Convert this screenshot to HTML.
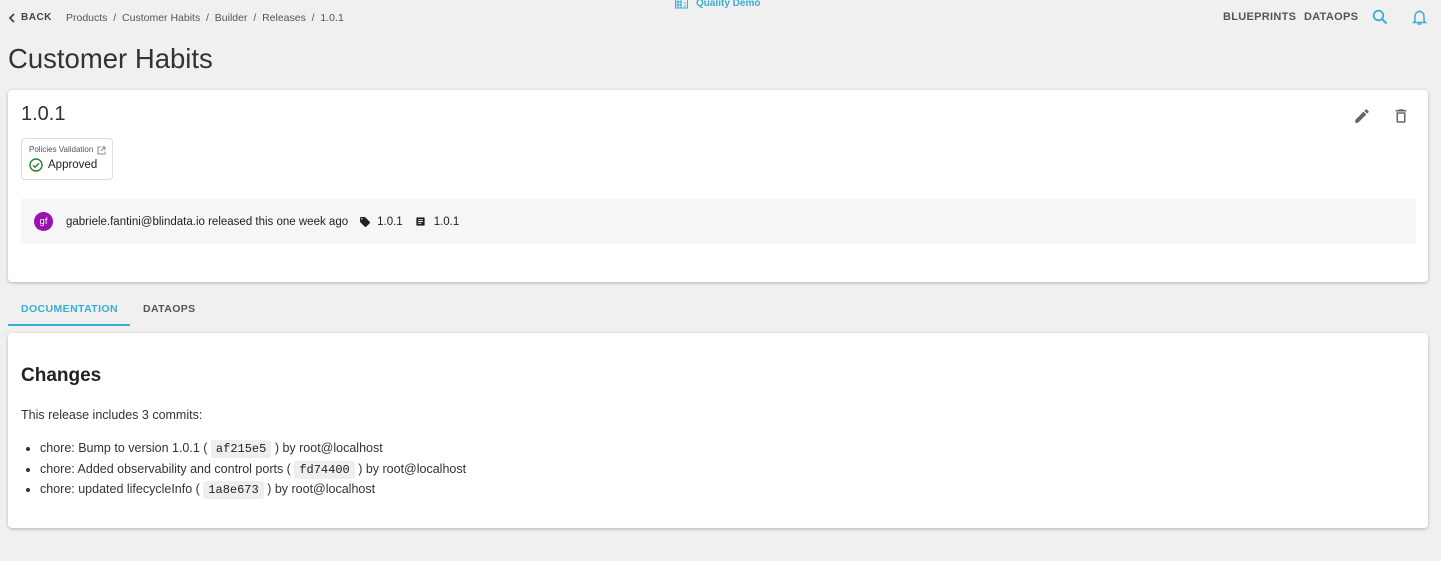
<!DOCTYPE html>
<html><head><meta charset="utf-8"><style>
*{box-sizing:border-box;margin:0;padding:0}
body{width:1441px;height:561px;background:#f0f0f0;font-family:"Liberation Sans",sans-serif;color:#333;position:relative;overflow:hidden}
.abs{position:absolute}
.card{position:absolute;left:8px;width:1420px;background:#fff;border-radius:4px;box-shadow:0 1px 3px rgba(0,0,0,.25)}
code{font-family:"Liberation Mono",monospace;font-size:12px;background:#eee;border-radius:3px;padding:2px 5px;color:#222}
</style></head><body>
<div class="abs" style="left:8px;top:12px;font-size:10px;font-weight:bold;letter-spacing:.5px;color:#444;display:flex;align-items:center">
<svg width="9" height="10" viewBox="0 0 9 10"><path d="M6 1L2 5l4 4" stroke="#444" stroke-width="1.8" fill="none"/></svg><span style="margin-left:4px">BACK</span></div>
<div class="abs" style="left:66px;top:12px;font-size:10.5px;color:#555">Products &nbsp;/ &nbsp;Customer Habits &nbsp;/ &nbsp;Builder &nbsp;/ &nbsp;Releases &nbsp;/ &nbsp;1.0.1</div>
<div class="abs" style="left:675px;top:-2px;font-size:10px;font-weight:bold;color:#3aaed3;display:flex;align-items:center">
<svg width="13" height="11" viewBox="0 0 13 11"><rect x="0.5" y="1" width="12" height="9" fill="none" stroke="#3aaed3"/><path d="M3 1v9M6 1v9M0 4h7M0 7h7M9 5h2M9 8h2" stroke="#3aaed3"/></svg><span style="margin-left:8px">Quality Demo</span></div>
<div class="abs" style="left:1223px;top:11px;font-size:11px;font-weight:bold;color:#555;letter-spacing:.3px">BLUEPRINTS</div>
<div class="abs" style="left:1304px;top:11px;font-size:11px;font-weight:bold;color:#555;letter-spacing:.3px">DATAOPS</div>
<svg class="abs" style="left:1372px;top:9px" width="16" height="16" viewBox="0 0 16 16"><circle cx="6.5" cy="6.5" r="4.8" stroke="#3aaed3" stroke-width="1.8" fill="none"/><path d="M10 10l4.5 4.5" stroke="#3aaed3" stroke-width="2"/></svg>
<svg class="abs" style="left:1412px;top:9px" width="15" height="17" viewBox="0 0 15 17"><path d="M3 12V7a4.5 4.5 0 019 0v5l1.5 1.5h-12z" stroke="#3aaed3" stroke-width="1.5" fill="none"/><path d="M5.5 15h4" stroke="#3aaed3" stroke-width="1.5"/><circle cx="7.5" cy="2" r="1" fill="#3aaed3"/></svg>
<div class="abs" style="left:8px;top:43px;font-size:27.5px;color:#333">Customer Habits</div>
<div class="card" style="top:90px;height:192px">
<div class="abs" style="left:13px;top:13px;font-size:20px;color:#333">1.0.1</div>
<svg class="abs" style="left:1345px;top:17px" width="18" height="18" viewBox="0 0 24 24"><path fill="#666" d="M3 17.25V21h3.75L17.81 9.94l-3.75-3.75L3 17.25zM20.71 7.04a1 1 0 000-1.41l-2.34-2.34a1 1 0 00-1.41 0l-1.83 1.83 3.75 3.75 1.83-1.83z"/></svg>
<svg class="abs" style="left:1384px;top:17px" width="18" height="18" viewBox="0 0 24 24"><path fill="#666" d="M6 19a2 2 0 002 2h8a2 2 0 002-2V7H6v12zm2-10h8v10H8V9zm7.5-5l-1-1h-5l-1 1H5v2h14V4z"/></svg>
<div class="abs" style="left:13px;top:48px;width:92px;height:42px;border:1px solid #ddd;border-radius:4px">
<div class="abs" style="left:7px;top:6px;font-size:8px;color:#555">Policies Validation</div>
<svg class="abs" style="left:75px;top:7px" width="9" height="9" viewBox="0 0 9 9"><path d="M3.5 1H1v7h7V5.5M5 1h3v3M8 1L4 5" stroke="#888" fill="none"/></svg>
<svg class="abs" style="left:7px;top:19px" width="14" height="14" viewBox="0 0 14 14"><circle cx="7" cy="7" r="6" stroke="#2e7d32" stroke-width="1.4" fill="none"/><path d="M4 7.2l2 2 4-4" stroke="#2e7d32" stroke-width="1.4" fill="none"/></svg>
<div class="abs" style="left:26px;top:20px;font-size:11.5px;color:#222">Approved</div>
</div>
<div class="abs" style="left:13px;top:109px;width:1395px;height:45px;background:#f5f6f7;display:flex;align-items:center;font-size:11.5px;color:#222">
<div style="margin-left:13px;width:19px;height:19px;border-radius:50%;background:#9c10b5;color:#fff;font-size:9.5px;display:flex;align-items:center;justify-content:center">gf</div>
<span style="margin-left:13px">gabriele.fantini@blindata.io released this one week ago</span>
<svg style="margin-left:11px" width="12" height="12" viewBox="0 0 24 24"><path fill="#222" d="M21.4 11.6l-9-9A2 2 0 0011 2H4a2 2 0 00-2 2v7c0 .55.22 1.05.59 1.42l9 9a2 2 0 002.82 0l7-7a2 2 0 00-.01-2.82zM5.5 7A1.5 1.5 0 117 5.5 1.5 1.5 0 015.5 7z"/></svg>
<span style="margin-left:6px">1.0.1</span>
<svg style="margin-left:12px" width="11" height="11" viewBox="0 0 24 24"><path fill="#222" d="M19 3H5a2 2 0 00-2 2v14a2 2 0 002 2h14a2 2 0 002-2V5a2 2 0 00-2-2zm-5 14H7v-2h7v2zm3-4H7v-2h10v2zm0-4H7V7h10v2z"/></svg>
<span style="margin-left:8px">1.0.1</span>
</div>
</div>
<div class="abs" style="left:21px;top:303px;font-size:10.5px;font-weight:bold;color:#3aaed3;letter-spacing:.4px">DOCUMENTATION</div>
<div class="abs" style="left:143px;top:303px;font-size:10.5px;font-weight:bold;color:#555;letter-spacing:.4px">DATAOPS</div>
<div class="abs" style="left:8px;top:324px;width:122px;height:2px;background:#3aaed3"></div>
<div class="card" style="top:333px;height:195px">
<div class="abs" style="left:13px;top:32px;font-size:19px;font-weight:bold;color:#222">Changes</div>
<div class="abs" style="left:13px;top:75px;font-size:12.5px;color:#333">This release includes 3 commits:</div>
<ul class="abs" style="left:32px;top:106px;font-size:12.5px;color:#333;line-height:19.5px">
<li>chore: Bump to version 1.0.1 ( <code>af215e5</code> ) by root@localhost</li>
<li>chore: Added observability and control ports ( <code>fd74400</code> ) by root@localhost</li>
<li>chore: updated lifecycleInfo ( <code>1a8e673</code> ) by root@localhost</li>
</ul>
</div>
</body></html>
